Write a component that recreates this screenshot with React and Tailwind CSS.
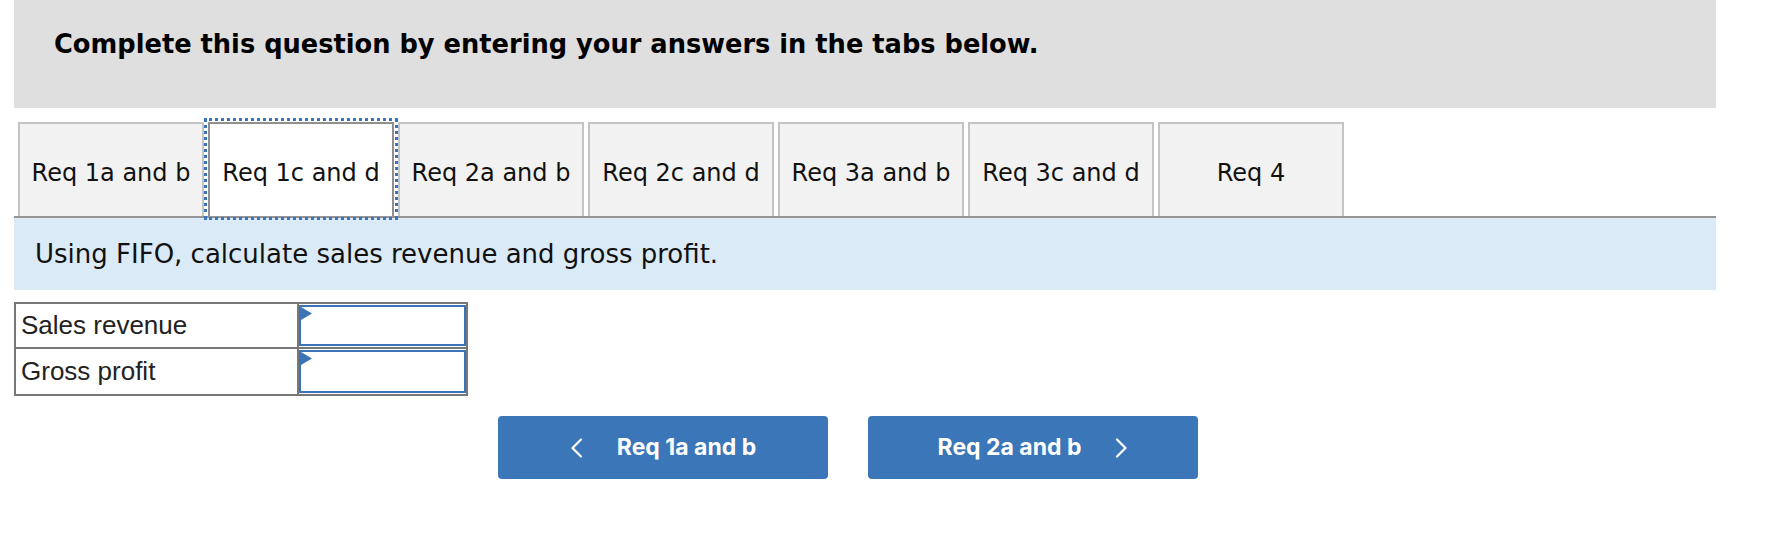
import React from "react";

const tabs = [
  "Req 1a and b",
  "Req 1c and d",
  "Req 2a and b",
  "Req 2c and d",
  "Req 3a and b",
  "Req 3c and d",
  "Req 4",
];

function Flag() {
  return (
    <svg className="absolute left-0 top-0" width="11" height="13" viewBox="0 0 11 13">
      <polygon points="0,0 11,6.5 0,13" fill="#3b73b9" />
    </svg>
  );
}

function Chevron({ dir }) {
  return (
    <svg width="13" height="20" viewBox="0 0 13 20" fill="none">
      <polyline
        points={dir === "left" ? "11,1.5 2.5,10 11,18.5" : "2,1.5 10.5,10 2,18.5"}
        stroke="white"
        strokeWidth="2.2"
        strokeLinecap="round"
        strokeLinejoin="round"
      />
    </svg>
  );
}

function AnswerRow({ label, last }) {
  return (
    <div className={`flex h-[45px] ${last ? "" : "border-b-2 border-[#777]"}`}>
      <div className="flex w-[283px] items-center border-r-2 border-[#777] pl-[5px] text-[26px] text-[#222] font-['Liberation_Sans',Arial,sans-serif]">
        {label}
      </div>
      <div className="flex-1 py-[1px]">
        <div className="relative h-full w-full border-2 border-[#3b73b9] bg-white">
          <Flag />
        </div>
      </div>
    </div>
  );
}

export default function App() {
  return (
    <div className="min-h-[544px] bg-white font-['DejaVu_Sans',Verdana,sans-serif] text-[#111]">
      <div className="mx-[14px] w-[1702px]">
        <div className="h-[108px] bg-[#dfdfdf] pl-[40px] pt-[32px]">
          <h2 className="text-[25.7px] font-bold leading-none text-black">
            Complete this question by entering your answers in the tabs below.
          </h2>
        </div>

        <div className="mt-[14px] flex gap-[4px] border-b-2 border-[#959595] pl-[4px]">
          {tabs.map((t, i) =>
            i === 1 ? (
              <div
                key={t}
                className="flex h-[94px] w-[186px] items-center justify-center border-2 border-b-0 border-[#8f8f8f] bg-white pt-[6px] text-[24px] outline-3 outline-offset-1 outline-dotted outline-[#3c74bb]"
              >
                {t}
              </div>
            ) : (
              <div
                key={t}
                className="flex h-[94px] w-[186px] items-center justify-center border-2 border-b-0 border-[#c4c4c4] bg-[#f2f2f2] pt-[6px] text-[24px]"
              >
                {t}
              </div>
            )
          )}
        </div>

        <div className="flex h-[72px] items-center bg-[#dbeaf7] pl-[21px] text-[26px] text-[#111]">
          Using FIFO, calculate sales revenue and gross profit.
        </div>

        <div className="mt-[12px] w-[454px] border-2 border-[#777]">
          <AnswerRow label="Sales revenue" />
          <AnswerRow label="Gross profit" last />
        </div>

        <div className="ml-[484px] mt-[20px] flex gap-[40px] font-['Inter',sans-serif]">
          <button className="flex h-[63px] w-[330px] items-center justify-center gap-[34px] rounded-[4px] bg-[#3b76b8] text-[23px] font-bold text-white">
            <Chevron dir="left" />
            <span>Req 1a and b</span>
          </button>
          <button className="flex h-[63px] w-[330px] items-center justify-center gap-[34px] rounded-[4px] bg-[#3b76b8] text-[23px] font-bold text-white">
            <span>Req 2a and b</span>
            <Chevron dir="right" />
          </button>
        </div>
      </div>
    </div>
  );
}
